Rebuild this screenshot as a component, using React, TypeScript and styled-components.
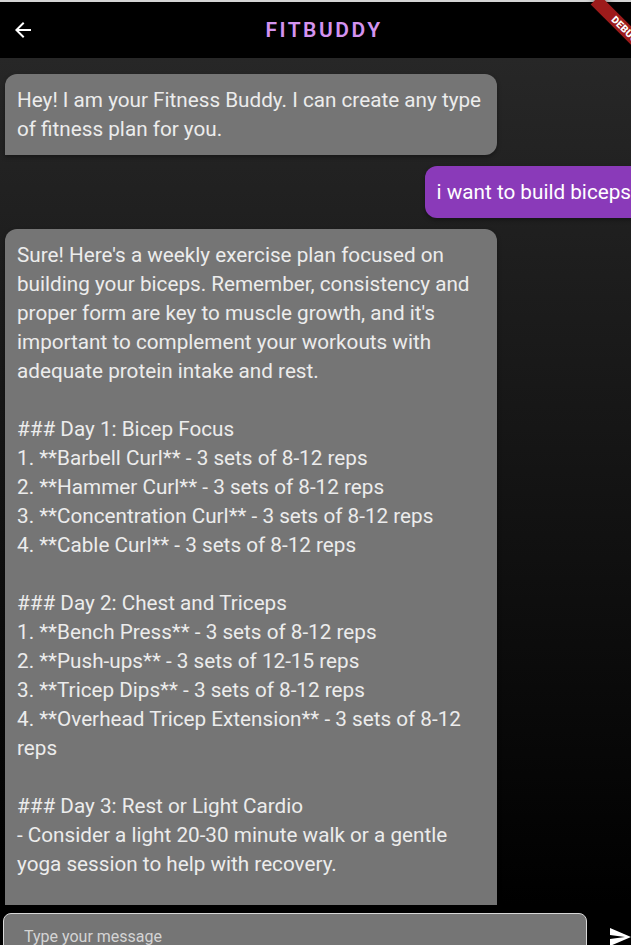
import React from "react";
import styled, { createGlobalStyle } from "styled-components";

const GlobalStyle = createGlobalStyle`
  html, body {
    margin: 0;
    padding: 0;
    background: #000;
    overflow: hidden;
  }
  * {
    box-sizing: border-box;
  }
`;

const Viewport = styled.div`
  position: relative;
  width: 100vw;
  height: 100vh;
  overflow: hidden;
  background: #000;
`;

// the app frame is a little wider/taller than the window, as in the capture
const Screen = styled.div`
  position: relative;
  width: 648px;
  height: 977px;
  display: flex;
  flex-direction: column;
  border-top: 2px solid #d4d4d4;
  font-family: Roboto, "Liberation Sans", sans-serif;
`;

const AppBar = styled.header`
  position: relative;
  height: 56px;
  flex-shrink: 0;
  display: flex;
  align-items: center;
  justify-content: center;
  background: #000;
`;

const BackButton = styled.button`
  position: absolute;
  left: 11px;
  top: 16px;
  width: 24px;
  height: 24px;
  padding: 0;
  border: none;
  background: none;
  color: #fff;
  cursor: pointer;
`;

const Title = styled.h1`
  margin: 0;
  font-size: 21px;
  font-weight: 600;
  letter-spacing: 2.5px;
  color: #d493f0;
`;

const Ribbon = styled.div`
  position: absolute;
  top: 21px;
  left: 583px;
  width: 84px;
  height: 13px;
  transform: rotate(45deg);
  background: #9d1b1b;
  box-shadow: 0 0 6px rgba(0, 0, 0, 0.5);
  color: #fff;
  font-family: Roboto, "Liberation Sans", sans-serif;
  font-size: 10px;
  font-weight: 900;
  line-height: 13px;
  text-align: center;
  letter-spacing: 0.2px;
  z-index: 5;
`;

const ChatList = styled.main`
  flex: 1;
  min-height: 0;
  overflow: hidden;
  display: flex;
  flex-direction: column;
  gap: 11px;
  padding: 16px 5px 0;
  background: linear-gradient(to bottom, #272727, #000);
`;

const Bubble = styled.div<{ $mine?: boolean }>`
  flex-shrink: 0;
  align-self: ${(p) => (p.$mine ? "flex-end" : "flex-start")};
  max-width: 492px;
  padding: 12px 12px 11px;
  border-radius: ${(p) => (p.$mine ? "12px 12px 0 12px" : "12px 12px 12px 0")};
  background: ${(p) => (p.$mine ? "#8a3ab9" : "#757575")};
  color: ${(p) => (p.$mine ? "#fff" : "#ececec")};
  box-shadow: 0 2px 4px rgba(0, 0, 0, 0.35);
  font-size: 20.7px;
  line-height: 29px;
  white-space: pre-wrap;
`;

const InputBar = styled.footer`
  flex-shrink: 0;
  display: flex;
  align-items: flex-start;
  gap: 9px;
  padding: 8px 4px 8px 3px;
  background: #000;
`;

const MessageField = styled.input`
  flex: 1;
  height: 56px;
  padding: 0 20px 10px;
  border: 1px solid #d8d8d8;
  border-radius: 8px;
  background: #757575;
  color: #fff;
  font-family: Roboto, "Liberation Sans", sans-serif;
  font-size: 16px;
  outline: none;

  &::placeholder {
    color: #d4d4d4;
  }
`;

const SendButton = styled.button`
  width: 48px;
  height: 48px;
  flex-shrink: 0;
  display: flex;
  align-items: center;
  justify-content: center;
  padding: 0;
  border: none;
  background: none;
  color: #fff;
  cursor: pointer;
`;

const ArrowBackIcon = () => (
  <svg width="24" height="24" viewBox="0 0 24 24" fill="currentColor">
    <path d="M20 11H7.83l5.59-5.59L12 4l-8 8 8 8 1.41-1.41L7.83 13H20v-2z" />
  </svg>
);

const SendIcon = () => (
  <svg width="24" height="24" viewBox="0 0 24 24" fill="currentColor">
    <path d="M2.01 21L23 12 2.01 3 2 10l15 2-15 2z" />
  </svg>
);

const messages: { mine?: boolean; text: string }[] = [
  {
    text: "Hey! I am your Fitness Buddy. I can create any type of fitness plan for you.",
  },
  { mine: true, text: "i want to build biceps" },
  {
    text: `Sure! Here's a weekly exercise plan focused on building your biceps. Remember, consistency and proper form are key to muscle growth, and it's important to complement your workouts with adequate protein intake and rest.

### Day 1: Bicep Focus
1. **Barbell Curl** - 3 sets of 8-12 reps
2. **Hammer Curl** - 3 sets of 8-12 reps
3. **Concentration Curl** - 3 sets of 8-12 reps
4. **Cable Curl** - 3 sets of 8-12 reps

### Day 2: Chest and Triceps
1. **Bench Press** - 3 sets of 8-12 reps
2. **Push-ups** - 3 sets of 12-15 reps
3. **Tricep Dips** - 3 sets of 8-12 reps
4. **Overhead Tricep Extension** - 3 sets of 8-12 reps

### Day 3: Rest or Light Cardio
- Consider a light 20-30 minute walk or a gentle yoga session to help with recovery.

### Day 4: Back and Biceps
1. **Pull-ups** - 3 sets of 6-10 reps
2. **Chin-ups** - 3 sets of 6-10 reps`,
  },
];

export default function App() {
  return (
    <Viewport>
      <GlobalStyle />
      <Screen>
        <AppBar>
          <BackButton aria-label="Back">
            <ArrowBackIcon />
          </BackButton>
          <Title>FITBUDDY</Title>
        </AppBar>
        <Ribbon>DEBUG</Ribbon>
        <ChatList>
          {messages.map((m, i) => (
            <Bubble key={i} $mine={m.mine}>
              {m.text}
            </Bubble>
          ))}
        </ChatList>
        <InputBar>
          <MessageField placeholder="Type your message" />
          <SendButton aria-label="Send">
            <SendIcon />
          </SendButton>
        </InputBar>
      </Screen>
    </Viewport>
  );
}
